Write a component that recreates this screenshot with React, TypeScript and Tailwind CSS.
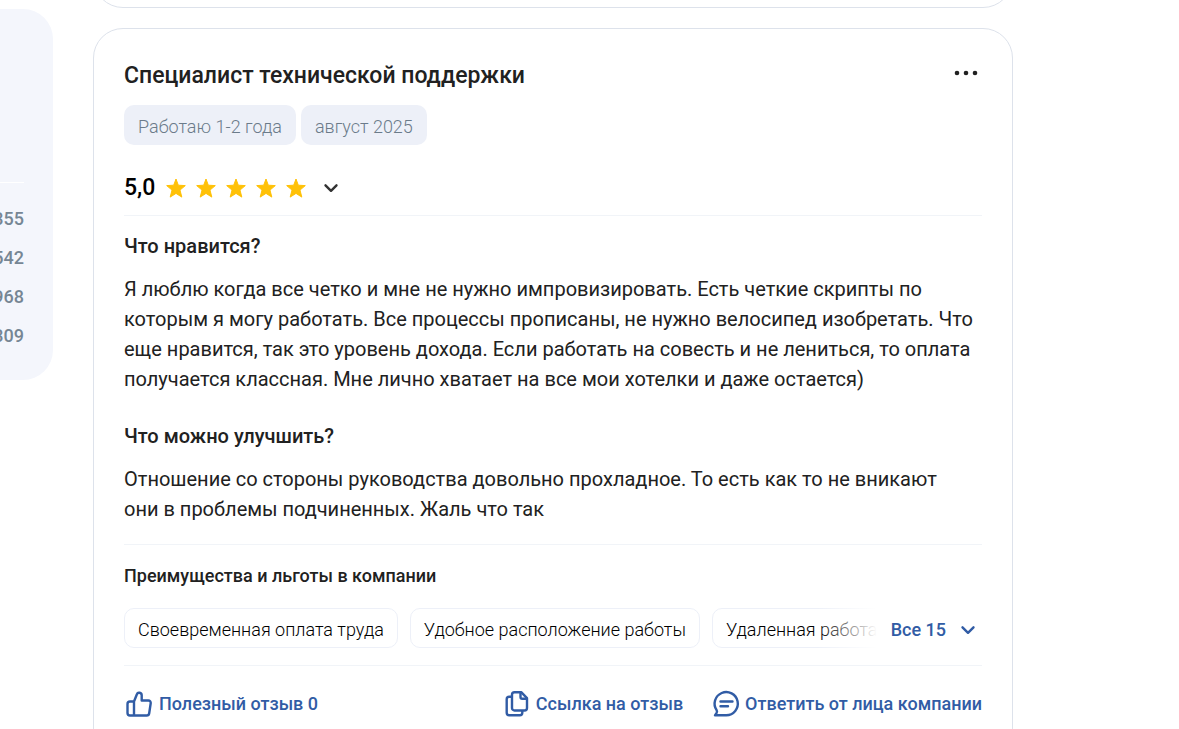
import { useState } from "react";

const benefits = [
  "Своевременная оплата труда",
  "Удобное расположение работы",
  "Удаленная работа",
];

const counts = ["355", "542", "968", "309"];

function Star() {
  return (
    <svg viewBox="0 0 20 20" className="size-5" fill="#ffc107" aria-hidden="true">
      <path
        d="M10 1l2.300 6.200 7 .4-5.300 4.500 1.800 7L10 15.400l-5.800 3.700 1.800-7L.7 7.600l7-.4z"
        stroke="#ffc107"
        strokeWidth="1"
        strokeLinejoin="round"
      />
    </svg>
  );
}

function Chevron() {
  return (
    <svg viewBox="0 0 16 16" className="size-4 shrink-0" fill="none" stroke="currentColor" strokeWidth="2.4" strokeLinecap="round" strokeLinejoin="round" aria-hidden="true">
      <path d="M2.500 5.300L8 10.800l5.500-5.500" />
    </svg>
  );
}

const iconProps = {
  viewBox: "0 0 30 30",
  className: "size-[30px] shrink-0",
  fill: "none",
  stroke: "currentColor",
  strokeWidth: 2.4,
  strokeLinecap: "round" as const,
  strokeLinejoin: "round" as const,
  "aria-hidden": true,
};

function ThumbIcon() {
  return (
    <svg {...iconProps}>
      <path d="M10 12.500v14M10 26.500H6a2.500 2.500 0 0 1-2.500-2.500V15A2.500 2.500 0 0 1 6 12.500h4l3-7.500c.8-2.200 4.700-1.500 4.700 1.300V11.500h6.600a2.400 2.400 0 0 1 2.400 2.800l-1.500 10a2.600 2.600 0 0 1-2.600 2.200z" />
    </svg>
  );
}

function CopyIcon() {
  return (
    <svg {...iconProps}>
      <path d="M12.500 3.200h6.700l5.800 6v9.800a2.500 2.500 0 0 1-2.500 2.500h-10a2.500 2.500 0 0 1-2.500-2.500V5.700a2.500 2.500 0 0 1 2.500-2.500z" />
      <path d="M18.500 3.700v4.300a1.700 1.700 0 0 0 1.700 1.700h4.300" />
      <path d="M9.500 7.700H7.200a2.500 2.500 0 0 0-2.500 2.500v13.500a2.500 2.500 0 0 0 2.500 2.500h10.600a2.500 2.500 0 0 0 2.500-2.500v-1.500" />
    </svg>
  );
}

function ReplyIcon() {
  return (
    <svg {...iconProps}>
      <path d="M4 26.300h11.300A11.600 11.600 0 1 0 5.600 21.200c.6 1 .5 1.900 0 2.700z" />
      <path d="M9.500 12.500h12M9.500 17.300h7.500" />
    </svg>
  );
}

export default function App() {
  const [open, setOpen] = useState(false);

  return (
    <div className="flex h-screen items-start overflow-hidden bg-white font-['Roboto',sans-serif] text-[#212121]">
      <aside className="mt-[9px] flex w-[53px] shrink-0 justify-end overflow-hidden">
        <div className="flex w-80 shrink-0 flex-col rounded-[30px] bg-[#f4f6fc] px-[29px] pt-[173px] pb-[29px]">
          <ul className="flex flex-col gap-[9px] border-t border-white pt-[21px] text-right text-lg leading-[30px] font-medium text-[#768694]">
            {counts.map((count) => (
              <li key={count}>{count}</li>
            ))}
          </ul>
        </div>
      </aside>

      <main className="ml-10 flex max-w-[920px] min-w-0 flex-1 flex-col gap-5">
        <div className="flex h-2 flex-col justify-end overflow-hidden">
          <div className="h-20 shrink-0 rounded-[30px] border border-[#dde2eb]" />
        </div>

        <article className="rounded-[30px] border border-[#dde2eb] p-[30px] pb-20">
          <header className="flex items-start justify-between">
            <h2 className="text-[23px] leading-[34px] font-medium">Специалист технической поддержки</h2>
            <button type="button" aria-label="Действия" className="flex h-7 w-8 items-center justify-center">
              <svg viewBox="0 0 24 6" className="h-1.5 w-6" fill="currentColor" aria-hidden="true">
                <circle cx="3" cy="3" r="2.300" />
                <circle cx="12" cy="3" r="2.300" />
                <circle cx="21" cy="3" r="2.300" />
              </svg>
            </button>
          </header>

          <div className="mt-3 flex gap-[5px] text-lg font-light text-[#6b7b8a]">
            <span className="flex h-10 items-center rounded-[10px] bg-[#edf0f8] px-3.5 pt-1">Работаю 1-2 года</span>
            <span className="flex h-10 items-center rounded-[10px] bg-[#edf0f8] px-3.5 pt-1">август 2025</span>
          </div>

          <div className="mt-[27px] flex items-center border-b border-[#f1f4f8] pb-3">
            <span className="text-[23px] leading-[31px] font-medium text-black">5,0</span>
            <span className="ml-[11px] flex gap-2.5">
              <Star />
              <Star />
              <Star />
              <Star />
              <Star />
            </span>
            <button type="button" aria-label="Подробнее об оценке" className="ml-[17px] text-[#333]">
              <Chevron />
            </button>
          </div>

          <section className="mt-[15px] text-xl leading-[30px]">
            <h3 className="font-medium">Что нравится?</h3>
            <p className="mt-[13px]">
              Я люблю когда все четко и мне не нужно импровизировать. Есть четкие скрипты по которым я могу
              работать. Все процессы прописаны, не нужно велосипед изобретать. Что еще нравится, так это
              уровень дохода. Если работать на совесть и не лениться, то оплата получается классная. Мне лично
              хватает на все мои хотелки и даже остается)
            </p>
          </section>

          <section className="mt-[27px] border-b border-[#f1f4f8] pb-5 text-xl leading-[30px]">
            <h3 className="font-medium">Что можно улучшить?</h3>
            <p className="mt-[13px] pr-5">
              Отношение со стороны руководства довольно прохладное. То есть как то не вникают они в проблемы
              подчиненных. Жаль что так
            </p>
          </section>

          <section className="border-b border-[#f1f4f8] pt-4 pb-[17px]">
            <h3 className="text-lg leading-[30px] font-medium">Преимущества и льготы в компании</h3>
            <div className="mt-[17px] flex items-center">
              <div className="relative min-w-0 flex-1 overflow-hidden">
                <ul className="flex gap-3 text-lg font-light whitespace-nowrap text-black">
                  {benefits.map((benefit) => (
                    <li key={benefit} className="flex h-10 shrink-0 items-center rounded-[10px] border border-[#edf0f8] px-[13px] pt-1">
                      {benefit}
                    </li>
                  ))}
                </ul>
                <div className="absolute inset-y-0 right-0 w-15 bg-linear-to-r from-white/0 to-white" />
              </div>
              <button
                type="button"
                aria-expanded={open}
                onClick={() => setOpen(!open)}
                className="ml-3.5 flex items-center gap-3.5 pt-1 pr-1.5 text-lg font-medium text-[#315ca5]"
              >
                Все 15
                <Chevron />
              </button>
            </div>
          </section>

          <footer className="mt-[23px] flex items-center justify-between text-lg leading-[30px] font-medium text-[#315ca5]">
            <button type="button" className="flex items-center gap-[5px]">
              <ThumbIcon />
              Полезный отзыв 0
            </button>
            <div className="flex items-center gap-7">
              <a href="#review" className="flex items-center gap-1">
                <CopyIcon />
                Ссылка на отзыв
              </a>
              <a href="#reply" className="flex items-center gap-1">
                <ReplyIcon />
                Ответить от лица компании
              </a>
            </div>
          </footer>
        </article>
      </main>
    </div>
  );
}
